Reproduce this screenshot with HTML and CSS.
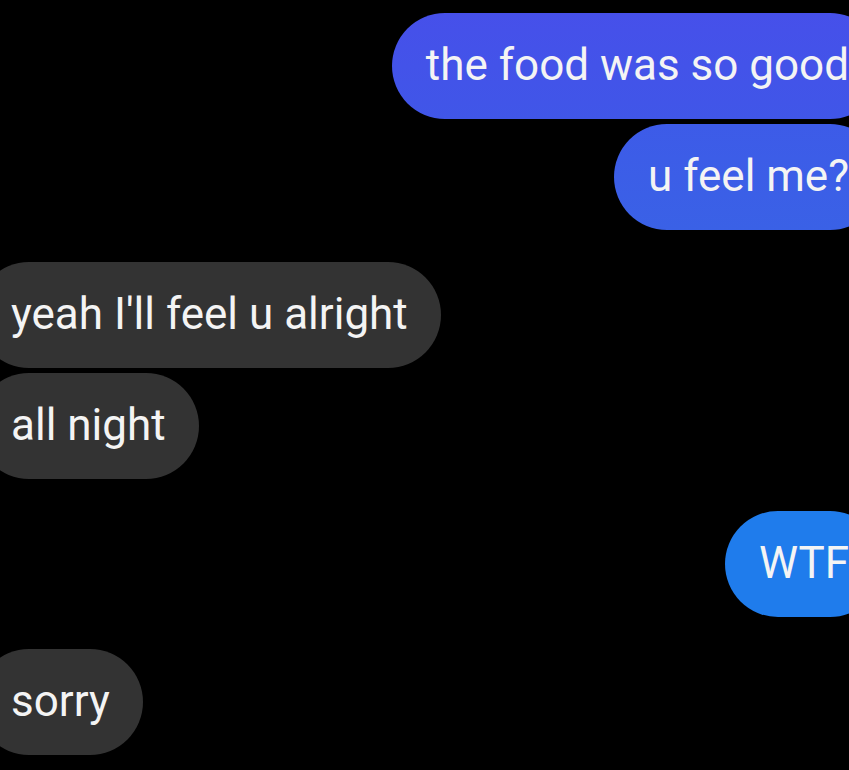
FILE: index.html
```html
<!DOCTYPE html>
<html lang="en">
<head>
<meta charset="utf-8">
<title>Chat</title>
<link rel="stylesheet" href="styles.css">
</head>
<body>
<main class="chat">
  <div class="group group-out">
    <div class="bubble out out-a">the food was so good</div>
    <div class="bubble out out-b">u feel me?</div>
  </div>
  <div class="group group-in">
    <div class="bubble in">yeah I'll feel u alright</div>
    <div class="bubble in">all night</div>
  </div>
  <div class="group group-out">
    <div class="bubble out out-c">WTF</div>
  </div>
  <div class="group group-in">
    <div class="bubble in">sorry</div>
  </div>
</main>
</body>
</html>
```
FILE: styles.css
```css
html, body {
  margin: 0;
  padding: 0;
  background: #000;
  height: 100%;
  overflow: hidden;
}
.chat {
  display: flex;
  flex-direction: column;
  gap: 32px;
  margin: 13px -34px 0 -24px;
  font-family: Roboto, "Noto Sans", sans-serif;
  font-size: 44px;
  color: #f4f4f4;
}
.group {
  display: flex;
  flex-direction: column;
  gap: 5px;
}
.group-out { align-items: flex-end; }
.group-in { align-items: flex-start; }
.bubble {
  height: 106px;
  box-sizing: border-box;
  line-height: 104px;
  border-radius: 53px;
  white-space: nowrap;
}
.in {
  background: #333333;
  padding: 0 33px 0 35px;
}
.out { padding: 0 34px 0 34px; }
.out-a { background: linear-gradient(180deg, #4650ea, #4056e8); }
.out-b { background: linear-gradient(180deg, #3d5be8, #3a61e6); }
.out-c { background: #1f7cec; }
```
